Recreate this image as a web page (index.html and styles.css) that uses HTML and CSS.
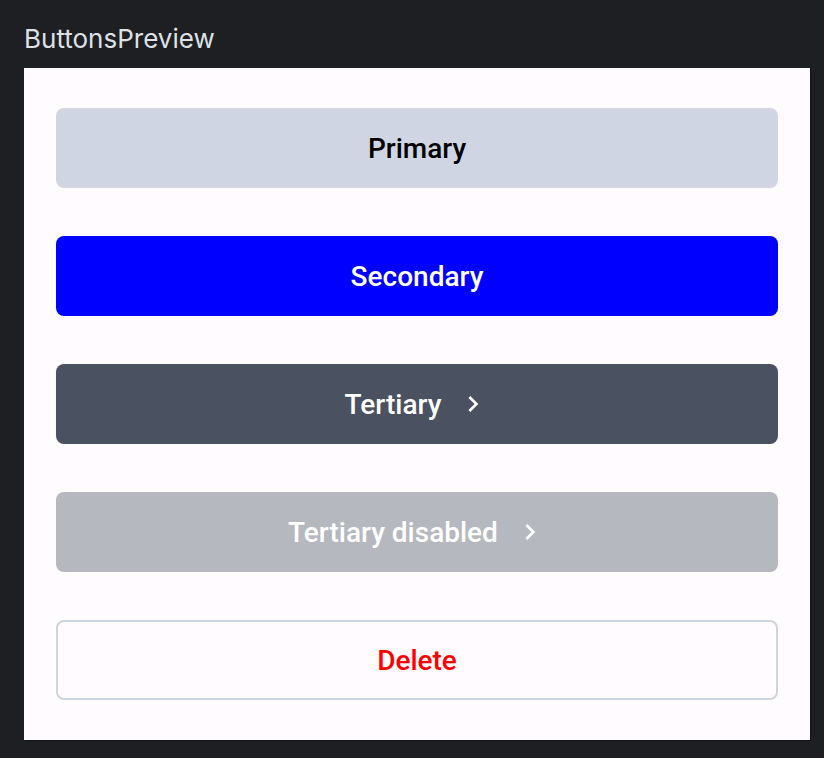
FILE: index.html
```html
<!DOCTYPE html>
<html>
<head>
<meta charset="utf-8">
<link rel="stylesheet" href="styles.css">
</head>
<body>
<div class="title">ButtonsPreview</div>
<div class="panel">
  <div class="btn primary"><span>Primary</span></div>
  <div class="btn secondary"><span>Secondary</span></div>
  <div class="btn tertiary"><span>Tertiary</span><svg class="chev" viewBox="0 0 24 24"><path d="M10 6L8.59 7.41 13.17 12l-4.58 4.59L10 18l6-6z"/></svg></div>
  <div class="btn disabled"><span>Tertiary disabled</span><svg class="chev" viewBox="0 0 24 24"><path d="M10 6L8.59 7.41 13.17 12l-4.58 4.59L10 18l6-6z"/></svg></div>
  <div class="btn delete"><span>Delete</span></div>
</div>
</body>
</html>
```
FILE: styles.css
```css
html, body {
  margin: 0;
  padding: 0;
  background: #1e1f22;
}
body {
  width: 824px;
  height: 758px;
  overflow: hidden;
}
.title {
  font-family: Inter, "Noto Sans", sans-serif;
  font-size: 26px;
  color: #dfe1e5;
  padding: 24px 0 0 24px;
  height: 44px;
  line-height: 30px;
  box-sizing: content-box;
}
.panel {
  margin-left: 24px;
  width: 786px;
  height: 672px;
  box-sizing: border-box;
  background: #fffbfe;
  padding: 40px 32px;
  display: flex;
  flex-direction: column;
  gap: 48px;
  box-shadow: 1px 1px 0 #111214;
}
.btn {
  height: 80px;
  flex: none;
  border-radius: 8px;
  display: flex;
  align-items: center;
  justify-content: center;
  font-family: Roboto, "Noto Sans", sans-serif;
  font-weight: 500;
  font-size: 28px;
  box-sizing: border-box;
}
.primary { background: #cfd5e2; color: #000; }
.secondary { background: #0000ff; color: #fff; }
.tertiary { background: #4a5261; color: #fff; }
.disabled { background: #b5b8bf; color: #fff; }
.delete { background: #fffbfe; color: #ff0000; border: 2px solid #cdd5e2; }
.chev {
  width: 32px;
  height: 32px;
  fill: currentColor;
  margin-left: 16px;
}
```
